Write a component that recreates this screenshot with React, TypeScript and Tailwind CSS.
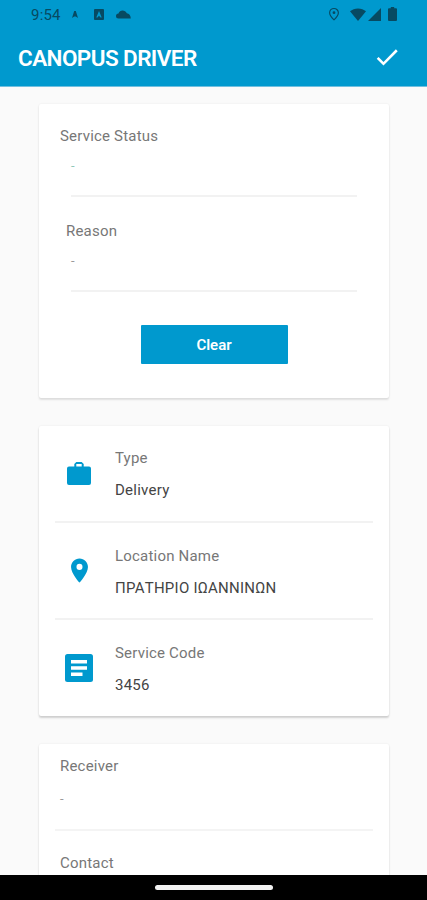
import type { ReactNode } from 'react'

type Detail = {
  label: string
  value: string
  icon: ReactNode
}

const details: Detail[] = [
  { label: 'Type', value: 'Delivery', icon: <BriefcaseIcon /> },
  { label: 'Location Name', value: 'ΠΡΑΤΗΡΙΟ ΙΩΑΝΝΙΝΩΝ', icon: <PinIcon /> },
  { label: 'Service Code', value: '3456', icon: <ArticleIcon /> },
]

export default function App() {
  return (
    <div className="flex h-[900px] w-[427px] flex-col overflow-hidden bg-[#fafafa] font-['Roboto','Noto_Sans',sans-serif] text-[15px] text-[#777777]">
      <header className="h-[87px] shrink-0 border-b border-[#70bfdf] bg-[#0099ce] text-white">
        <StatusBar />
        <div className="flex h-[60px] items-center justify-between pr-[26px] pl-[18px]">
          <h1 className="pt-px text-[22.500px] font-semibold tracking-[-0.58px]">CANOPUS DRIVER</h1>
          <button type="button" aria-label="Confirm" className="pb-0.5">
            <svg width="28" height="28" viewBox="0 0 24 24" fill="currentColor">
              <path d="M9 16.200 4.800 12l-1.600 1.600L9 19.200 21.200 7l-1.600-1.600z" />
            </svg>
          </button>
        </div>
      </header>

      <main className="flex min-h-0 flex-1 flex-col gap-7 overflow-hidden pt-[17px] pr-[38px] pl-[39px]">
        <section className="h-[294px] shrink-0 rounded-[2px] bg-white pt-[22px] shadow-[0_2px_2px_rgba(0,0,0,0.1),0_0_2px_rgba(0,0,0,0.08)]">
          <Field label="Service Status" labelClass="pl-[21px]" dashClass="text-[#8fc7b8]" />
          <Field label="Reason" labelClass="pl-[27px]" dashClass="text-[#9a9a9a]" />
          <div className="flex justify-center pt-[10px]">
            <button
              type="button"
              className="h-[39px] w-[147px] rounded-[1px] bg-[#0099ce] pt-0.5 font-semibold text-white"
            >
              Clear
            </button>
          </div>
        </section>

        <section className="h-[290px] shrink-0 rounded-[2px] bg-white shadow-[0_2px_2px_rgba(0,0,0,0.16),0_0_2px_rgba(0,0,0,0.08)]">
          <div className="-mt-[0.6px]">
            {details.map((d, i) => (
              <DetailRow key={d.label} detail={d} last={i === details.length - 1} />
            ))}
          </div>
        </section>

        <section className="h-[290px] shrink-0 rounded-[2px] bg-white pt-3 shadow-[0_2px_2px_rgba(0,0,0,0.12),0_0_2px_rgba(0,0,0,0.08)]">
          <div className="mr-4 ml-4 h-[75px] border-b-2 border-[#f4f4f4] pl-[5px]">
            <p className="h-5 leading-5 tracking-[0.2px]">Receiver</p>
            <p className="mt-[13px] h-5 text-[13px] leading-5 text-[#9a9a9a]">-</p>
          </div>
          <p className="mt-[22px] h-5 pl-[21px] leading-5 tracking-[0.2px]">Contact</p>
        </section>
      </main>

      <footer className="flex h-[25px] shrink-0 items-center justify-center bg-black">
        <div className="h-[5px] w-[118px] rounded-full bg-[#f2f2f2]" />
      </footer>
    </div>
  )
}

function StatusBar() {
  return (
    <div className="flex h-[28px] items-center pr-[30px] pl-[31px] text-[#074a62]">
      <span className="w-[30px] pt-0.5 text-[15px] tracking-[0.2px] whitespace-nowrap">9:54</span>
      <svg className="ml-[11px]" width="6" height="7" viewBox="0 0 6 7" fill="currentColor">
        <path d="M2.200 0h1.600L6 7 3.800 5.500H2.200L0 7z" />
      </svg>
      <svg className="ml-[16px]" width="10" height="11" viewBox="0 0 11 11" preserveAspectRatio="none">
        <rect width="11" height="11" rx="1" fill="currentColor" />
        <path d="M5.500 2 8.500 8.500H7.200L5.500 6.800 3.800 8.500H2.500z" fill="#0099ce" />
      </svg>
      <svg className="ml-[12px]" width="15" height="9" viewBox="0 0 15 9" fill="currentColor">
        <path d="M2.500 8.500a2.500 2.500 0 0 1 0-5C3.500-.3 9-.8 10.800 3.200 13 3.300 14.800 5.500 14.800 8.500z" />
      </svg>
      <div className="ml-auto flex items-center">
        <svg width="14" height="14" viewBox="0 0 24 24" fill="none" stroke="currentColor" strokeWidth="2">
          <path d="M12 2.500a7.500 7.500 0 0 0-7.500 7.500c0 5.200 7.500 12 7.500 12s7.500-6.800 7.500-12A7.500 7.500 0 0 0 12 2.500z" />
          <circle cx="12" cy="9.800" r="2.400" fill="currentColor" stroke="none" />
        </svg>
        <svg className="ml-[9px]" width="16" height="13" viewBox="0 0 16 13" fill="currentColor">
          <path d="M8 13 0 3.300C4-.6 12-.6 16 3.300z" />
        </svg>
        <svg className="ml-[2px]" width="13" height="13" viewBox="0 0 13 13" fill="currentColor">
          <path d="M0 13 13 0v13z" />
        </svg>
        <svg className="ml-[7px]" width="9" height="14" viewBox="0 0 9 14" fill="currentColor">
          <path d="M2.800 0h3.400v1.300H8q1 0 1 1V13q0 1-1 1H1q-1 0-1-1V2.300q0-1 1-1h1.800z" />
        </svg>
      </div>
    </div>
  )
}

function Field({
  label,
  labelClass,
  dashClass,
}: {
  label: string
  labelClass: string
  dashClass: string
}) {
  return (
    <div className="h-[94.500px]">
      <p className={`h-5 leading-5 tracking-[0.2px] ${labelClass}`}>{label}</p>
      <div className="mr-8 ml-8 h-[51px] border-b-2 border-[#f2f2f2] pt-[10px]">
        <p className={`h-5 text-[13px] leading-5 ${dashClass}`}>-</p>
      </div>
    </div>
  )
}

function DetailRow({ detail, last }: { detail: Detail; last: boolean }) {
  return (
    <div
      className={`mr-4 ml-4 flex h-[97.500px] items-center border-b-2 ${
        last ? 'border-transparent' : 'border-[#f2f2f2]'
      }`}
    >
      <div className="flex w-12 shrink-0 justify-center text-[#0099ce]">{detail.icon}</div>
      <div className="pt-0.5 pl-[12px]">
        <p className="h-5 leading-5 tracking-[0.2px]">{detail.label}</p>
        <p className="mt-3 h-5 leading-5 tracking-[0.25px] text-[#444444]">{detail.value}</p>
      </div>
    </div>
  )
}

function BriefcaseIcon() {
  return (
    <svg width="24" height="23" viewBox="0 0 24 23" fill="currentColor">
      <path
        fillRule="evenodd"
        d="M9.300 0h5.400l2 2v2.500H22q2 0 2 2V21q0 2-2 2H2q-2 0-2-2V6.500q0-2 2-2h5.300V2zM9.300 2v2.500h5.400V2z"
      />
    </svg>
  )
}

function PinIcon() {
  return (
    <svg width="29" height="29" viewBox="0 0 24 24" fill="currentColor">
      <path d="M12 2C8.130 2 5 5.130 5 9c0 5.250 7 13 7 13s7-7.750 7-13c0-3.870-3.130-7-7-7zm0 9.500a2.500 2.500 0 0 1 0-5 2.500 2.500 0 0 1 0 5z" />
    </svg>
  )
}

function ArticleIcon() {
  return (
    <svg width="28" height="28" viewBox="0 0 28 28">
      <rect width="28" height="28" rx="2.500" fill="currentColor" />
      <path d="M6 6h16v3.500H6zM6 12.200h16v3.500H6zM6 18.500h11.500V22H6z" fill="white" />
    </svg>
  )
}
